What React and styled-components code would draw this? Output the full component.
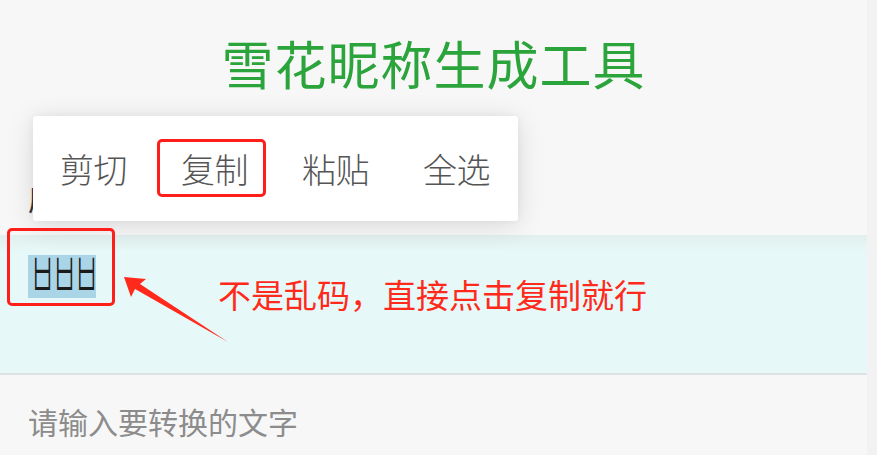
import React from "react";
import styled, { createGlobalStyle } from "styled-components";

const GlobalStyle = createGlobalStyle`
  html, body {
    margin: 0;
    padding: 0;
    background: #f7f7f7;
    font-family: "Noto Sans CJK SC", "Noto Sans", sans-serif;
  }
`;

const Page = styled.div`
  display: flex;
  width: 877px;
  height: 455px;
  overflow: hidden;
`;

const Main = styled.main`
  position: relative;
  width: 867px;
  display: flex;
  flex-direction: column;
  background: #f7f7f7;
`;

const ScrollStrip = styled.div`
  width: 10px;
  background: #f2f2f2;
`;

const Title = styled.h1`
  margin: 0;
  padding-top: 37px;
  height: 100px;
  box-sizing: border-box;
  text-align: center;
  font-size: 52px;
  line-height: 52px;
  font-weight: 400;
  color: #2ba43b;
  letter-spacing: 1px;
`;

const Label = styled.div`
  height: 135px;
  box-sizing: border-box;
  padding: 80px 0 0 28px;
  font-size: 30px;
  line-height: 36px;
  color: #333;
`;

const ResultArea = styled.section`
  position: relative;
  height: 140px;
  box-sizing: border-box;
  padding: 20px 0 0 28px;
  background: linear-gradient(#e2efee 0%, #e6f8f7 12%, #e6f9f8 100%);
  border-bottom: 2px solid #dde3e3;
`;

const Selected = styled.span`
  display: inline-flex;
  gap: 8px;
  padding: 0 5px 0 5px;
  height: 43px;
  align-items: center;
  background: #a9d5e7;
`;

const Tofu = styled.span`
  display: inline-block;
  width: 14px;
  text-align: center;
  font-family: "Noto Sans CJK KR", sans-serif;
  font-size: 19px;
  line-height: 19px;
  font-weight: 300;
  color: #1a1a1a;
  transform: translateY(-7px) scale(1.45, 3.5);
  transform-origin: center;
`;

const InputArea = styled.div`
  flex: 1;
  padding: 26px 0 0 28px;
  font-size: 30px;
  line-height: 40px;
  color: #8c8c8c;
`;

const Menu = styled.div`
  position: absolute;
  left: 33px;
  top: 116px;
  width: 485px;
  height: 105px;
  background: #fff;
  border-radius: 3px;
  box-shadow: 0 4px 28px rgba(0, 0, 0, 0.12), 0 0 8px rgba(0, 0, 0, 0.05);
  display: flex;
  align-items: center;
  gap: 54px;
  padding-left: 27px;
  box-sizing: border-box;
`;

const MenuItem = styled.span`
  font-size: 34px;
  line-height: 40px;
  font-weight: 300;
  color: #555;
  letter-spacing: -0.5px;
`;

const Mark = styled.div`
  position: absolute;
  left: ${(p) => p.x}px;
  top: ${(p) => p.y}px;
  width: ${(p) => p.w}px;
  height: ${(p) => p.h}px;
  border: 3px solid #ff1f1a;
  border-radius: 5px;
  box-sizing: border-box;
`;

const Note = styled.div`
  position: absolute;
  left: 218px;
  top: 274px;
  font-size: 33px;
  line-height: 40px;
  color: #ff2a1c;
  white-space: nowrap;
`;

const Arrow = styled.svg`
  position: absolute;
  left: 0;
  top: 0;
  pointer-events: none;
`;

export default function App() {
  return (
    <>
      <GlobalStyle />
      <Page>
        <Main>
          <Title>雪花昵称生成工具</Title>
          <Label>原文</Label>
          <ResultArea>
            <Selected>
              <Tofu>ㅂ</Tofu>
              <Tofu>ㅂ</Tofu>
              <Tofu>ㅂ</Tofu>
            </Selected>
          </ResultArea>
          <InputArea>请输入要转换的文字</InputArea>

          <Menu>
            <MenuItem>剪切</MenuItem>
            <MenuItem>复制</MenuItem>
            <MenuItem>粘贴</MenuItem>
            <MenuItem>全选</MenuItem>
          </Menu>
          <Mark x={157} y={139} w={109} h={58} />
          <Mark x={7} y={228} w={108} h={78} />
          <Arrow width="260" height="360">
            <polygon
              points="124,277 146,279 140,284 228,342 135,289 131,297"
              fill="#ff2a1c"
            />
          </Arrow>
          <Note>不是乱码，直接点击复制就行</Note>
        </Main>
        <ScrollStrip />
      </Page>
    </>
  );
}
